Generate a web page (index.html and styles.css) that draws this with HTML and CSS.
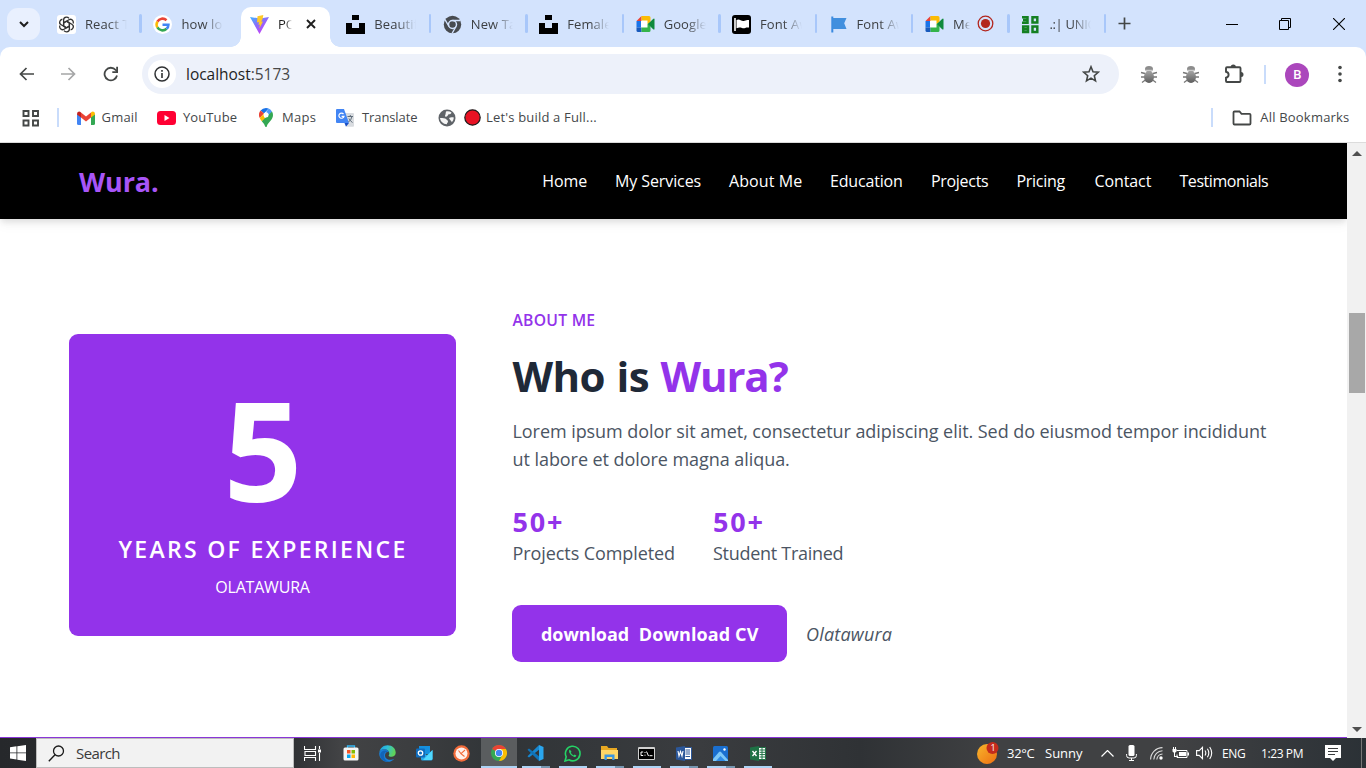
FILE: index.html
```html
<!DOCTYPE html>
<html lang="en">
<head>
<meta charset="utf-8">
<title>Portfolio</title>
<link rel="stylesheet" href="styles.css">
</head>
<body>
<svg class="defs" width="0" height="0">
  <defs>
    <linearGradient id="vt" x1="0" y1="0" x2=".7" y2="1"><stop offset="0" stop-color="#41b5ff"/><stop offset=".5" stop-color="#8d6bfb"/><stop offset="1" stop-color="#c83df5"/></linearGradient>
    <linearGradient id="bg1" x1="0" y1="0" x2="0" y2="1"><stop offset="0" stop-color="#a5a5a5"/><stop offset="1" stop-color="#5c5c5c"/></linearGradient>
    <linearGradient id="sun" x1="0" y1="0" x2="1" y2="1"><stop offset="0" stop-color="#f8b62c"/><stop offset="1" stop-color="#ee6f12"/></linearGradient>
    <linearGradient id="edge" x1="0" y1="0" x2="1" y2=".3"><stop offset="0" stop-color="#1b9de2"/><stop offset=".5" stop-color="#2fc0d8"/><stop offset="1" stop-color="#5fd35a"/></linearGradient>
    <symbol id="unsplash" viewBox="0 0 19 19"><path d="M6 0h7v5H6zM0 8h6v5h7V8h6v11H0z" fill="#000"/></symbol>
    <symbol id="meet" viewBox="0 0 18 16"><path d="M4 4h8v8H4z" fill="#fff"/><path d="M0 5l5-5v5z" fill="#ea4335"/><path d="M5 0h7.500q1.500 0 1.500 1.500V6l-3 2V4.500H5z" fill="#fbbc04"/><path d="M0 5h4.500v6.500H0z" fill="#1a73e8"/><path d="M0 11.500h5V16H1.500Q0 16 0 14.500z" fill="#185abc"/><path d="M5 11.500h6V8l3-2v8.500q0 1.500-1.500 1.500H5z" fill="#34b44a"/><path d="M11.500 8l5.100-5.100Q18 2 18 3.300v9.400q0 1.400-1.400.500z" fill="#0f8a3c"/></symbol>
    <symbol id="bug" viewBox="0 0 18 18"><path d="M1 7l4 1M1 11.500h4M2 17l4-3M17 7l-4 1M17 11.500h-4M16 17l-4-3" stroke="#777" fill="none" stroke-width="1.300"/><ellipse cx="9" cy="3.500" rx="4" ry="3" fill="#8d8d8d"/><path d="M5.500 4.800h7" stroke="#ddd"/><ellipse cx="9" cy="11.500" rx="5" ry="6" fill="url(#bg1)"/></symbol>
  </defs>
</svg>

<header class="chrome">
  <div class="tabstrip">
    <button class="tabsearch"><svg width="12" height="8" viewBox="0 0 12 8"><path d="M2 2l4 4 4-4" fill="none" stroke="#1f1f1f" stroke-width="2"/></svg></button>
    <div class="tabs">
      <div class="tab sep"><svg class="fav" width="19" height="19" viewBox="0 0 19 19"><rect width="19" height="19" rx="3" fill="#fff"/><g fill="none" stroke="#333" stroke-width="1.300"><path id="petal" d="M9.500 6.200L6.600 7.800V5q0-2.700 2.700-2.900 1.700-.1 2.700 1.200M6.600 7.800v3.400"/><use href="#petal" transform="rotate(60 9.500 9.500)"/><use href="#petal" transform="rotate(120 9.500 9.500)"/><use href="#petal" transform="rotate(180 9.500 9.500)"/><use href="#petal" transform="rotate(240 9.500 9.500)"/><use href="#petal" transform="rotate(300 9.500 9.500)"/></g></svg><span class="label">React Tailwind</span></div>
      <div class="tab"><svg class="fav google" width="19" height="19" viewBox="0 0 19 19"><circle cx="9.500" cy="9.500" r="9.500" fill="#fff"/><g fill="none" stroke-width="2.600"><path d="M4.400 6.600A5.900 5.900 0 0 1 13.500 5.200" stroke="#ea4335"/><path d="M4.400 12.400a5.900 5.900 0 0 1 0-5.800" stroke="#fbbc04"/><path d="M13.500 13.800a5.900 5.900 0 0 1-9.100-1.400" stroke="#34a853"/><path d="M9.500 9.700h5.900q0 2.700-1.900 4.100" stroke="#4285f4"/></g></svg><span class="label">how long does</span></div>
      <div class="tab active"><svg class="fav" width="19" height="19" viewBox="0 0 19 19"><path d="M0 2l9.500 17L19 2l-9 1.500z" fill="url(#vt)"/><path d="M13.300 0L7.500 1.200 7 7.500l2-.4-.6 2.700 1.500-.4-.6 4L13 6.500l-1.800.3 1.500-3.200z" fill="#ffc928"/></svg><span class="label">PORTFOLIO</span><svg class="close" width="10" height="10" viewBox="0 0 10 10"><path d="M1 1l8 8M9 1L1 9" stroke="#1f1f1f" stroke-width="1.900"/></svg></div>
      <div class="tab sep"><svg class="fav" width="19" height="19"><use href="#unsplash"/></svg><span class="label">Beautiful girl</span></div>
      <div class="tab sep"><svg class="fav" width="19" height="19" viewBox="0 0 19 19"><circle cx="9.500" cy="9.500" r="8.700" fill="#474b50"/><circle cx="9.500" cy="9.500" r="4" fill="none" stroke="#d3e3fd" stroke-width="1.500"/><path d="M9.500 5.500h8M6 11.500L2 4.700M13 11.500l-4 7" stroke="#d3e3fd" stroke-width="1.400"/></svg><span class="label">New Tab page</span></div>
      <div class="tab sep"><svg class="fav" width="19" height="19"><use href="#unsplash"/></svg><span class="label">Female pics</span></div>
      <div class="tab sep"><svg class="fav" width="19" height="16"><use href="#meet"/></svg><span class="label">Google Meet</span></div>
      <div class="tab sep"><svg class="fav" width="19" height="19" viewBox="0 0 19 19"><rect width="19" height="19" rx="3" fill="#000"/><path d="M3 3v13" stroke="#fff" stroke-width="1.600"/><path d="M4.500 5c3-2 5 2 8 .7 2-.8 3-.8 4.500-.7v7.500c-4-.5-4 1.300-7 .5-2-.6-3-.7-5.500.3z" fill="#fff"/></svg><span class="label">Font Awesome</span></div>
      <div class="tab sep"><svg class="fav" width="19" height="19" viewBox="0 0 19 19"><path d="M3.300 1.500v16" stroke="#3b8ae0" stroke-width="2"/><path d="M3.500 3h14l-2.300 5.200L17.500 14H3.500z" fill="#418fde"/></svg><span class="label">Font Awesome</span></div>
      <div class="tab sep"><svg class="fav" width="19" height="16"><use href="#meet"/></svg><span class="label short">Meet</span><svg class="rec" width="17" height="17" viewBox="0 0 17 17"><circle cx="8.500" cy="8.500" r="7.300" fill="none" stroke="#b3261e" stroke-width="1.300"/><circle cx="8.500" cy="8.500" r="4.600" fill="#b3261e"/></svg></div>
      <div class="tab sep"><svg class="fav" width="19" height="19" viewBox="0 0 19 19"><g fill="none" stroke="#158022" stroke-width="2.500"><path d="M1 2.200h5.500v5.600H1M2 5h4M11.500 2.200h4.800v5.200h-4.800zM2.200 11.500h4.800v5.500H2.200zM2 14.200h5M11.500 11.500h4.800v5.500h-4.800z"/></g></svg><span class="label wide">.:| UNICAL</span></div>
    </div>
    <svg class="plus" width="13" height="13" viewBox="0 0 13 13"><path d="M6.500 .5v12M.5 6.500h12" stroke="#444746" stroke-width="1.700"/></svg>
    <div class="winctl">
      <svg width="12" height="12" viewBox="0 0 12 12"><path d="M0 6.500h12" stroke="#000"/></svg>
      <svg width="12" height="12" viewBox="0 0 12 12"><path d="M.5 2.500h9v9h-9zM2.500 2V.5h9v9H10" fill="none" stroke="#000"/></svg>
      <svg width="12" height="12" viewBox="0 0 12 12"><path d="M0 0l12 12M12 0L0 12" stroke="#000" stroke-width="1.100"/></svg>
    </div>
  </div>

  <div class="toolbar">
    <svg class="back" width="15" height="14" viewBox="0 0 15 14"><path d="M15 7H1.500M7.500 1l-6 6 6 6" fill="none" stroke="#444746" stroke-width="1.700"/></svg>
    <svg class="fwd" width="15" height="14" viewBox="0 0 15 14"><path d="M0 7h13.500M7.500 1l6 6-6 6" fill="none" stroke="#a5a6a7" stroke-width="1.700"/></svg>
    <svg class="reload" width="16" height="16" viewBox="0 0 16 16"><path d="M14 9.500A6.300 6.300 0 1 1 12.700 4l1.800 2" fill="none" stroke="#444746" stroke-width="1.800"/><path d="M15 .8V7H9.300V5.200h3.900V.8z" fill="#444746"/></svg>
    <div class="omnibox">
      <span class="info"><svg width="16" height="16" viewBox="0 0 16 16"><circle cx="8" cy="8" r="7" fill="none" stroke="#303234" stroke-width="1.500"/><path d="M8 7v5M8 4v1.700" stroke="#303234" stroke-width="1.600"/></svg></span>
      <span class="url">localhost<i>:5173</i></span>
      <svg class="star" width="18" height="18" viewBox="0 0 18 18"><path d="M9 1.800l2 4.900 5.300.5-4 3.500 1.200 5.200L9 13.100l-4.500 2.800 1.200-5.200-4-3.500 5.300-.5z" fill="none" stroke="#444746" stroke-width="1.600"/></svg>
    </div>
    <svg class="ext1" width="18" height="19"><use href="#bug"/></svg>
    <svg class="ext2" width="18" height="19"><use href="#bug"/></svg>
    <svg class="puzzle" width="20" height="20" viewBox="0 0 20 20"><path d="M2 4.200q0-1 1-1h12.500q1 0 1 1V17q0 1-1 1H3q-1 0-1-1v-3.300q2.600-.6 2.600-3T2 7.700z" fill="none" stroke="#444746" stroke-width="1.900"/><path d="M6.700 3a2.600 2.600 0 0 1 5.200 0zM17 8a2.500 2.500 0 0 1 0 5z" fill="#444746"/></svg>
    <span class="vsep tsep"></span>
    <span class="avatar">B</span>
    <svg class="dots" width="4" height="18" viewBox="0 0 4 18"><g fill="#444746"><circle cx="2" cy="2.500" r="1.800"/><circle cx="2" cy="9" r="1.800"/><circle cx="2" cy="15.500" r="1.800"/></g></svg>
  </div>

  <div class="bookmarks">
    <svg class="apps" width="18" height="18" viewBox="0 0 18 18"><g fill="none" stroke="#444746" stroke-width="1.900"><path d="M1.500 2h5v5h-5zM11 2h5v5h-5zM1.500 11.500h5v5h-5zM11 11.500h5v5h-5z"/></g></svg>
    <span class="vsep"></span>
    <div class="bm gmail"><svg width="18" height="14" viewBox="0 0 18 14"><path d="M0 3v9.500Q0 14 1.500 14H4V5z" fill="#4285f4"/><path d="M18 3v9.500q0 1.500-1.500 1.500H14V5z" fill="#34a853"/><path d="M4 1.500v5l5 4 5-4v-5L9 5.400z" fill="#ea4335"/><path d="M0 3Q0 .7 2 .6q1.200 0 2 .9v5L0 3.500z" fill="#c5221f"/><path d="M18 3q0-2.300-2-2.400-1.200 0-2 .9v5l4-3z" fill="#fbbc04"/></svg><span>Gmail</span></div>
    <div class="bm yt"><svg width="19" height="14" viewBox="0 0 19 14"><rect width="19" height="14" rx="3.500" fill="#ff0033"/><path d="M7.500 4v6l5-3z" fill="#fff"/></svg><span>YouTube</span></div>
    <div class="bm maps"><svg width="14" height="19" viewBox="0 0 14 19"><path d="M7 0A7 7 0 0 0 1.600 2.500L5 5.500l4.700-5Q8.500 0 7 0z" fill="#1a73e8"/><path d="M1.600 2.500A6.800 6.800 0 0 0 .8 10l4.200-4.500z" fill="#ea4335"/><path d="M9.700.5L7 4.300a2.700 2.700 0 0 1 2 4.400l4-5A7 7 0 0 0 9.700.5z" fill="#4f9cf9"/><path d="M5 5.500L.8 10q.7 1.700 2 3.200L9 8.700Q7 11 5 9z" fill="#fbbc04"/><path d="M13 3.500L2.800 13.200Q5.500 16 6.200 18.400q.8 1.200 1.600 0C9 14 14 12 14 7q0-2-1-3.500z" fill="#34a853"/><circle cx="7" cy="7" r="2.500" fill="#fff"/></svg><span>Maps</span></div>
    <div class="bm trans"><svg width="18" height="18" viewBox="0 0 18 18"><path d="M8 4h9q1 0 1 1v12q0 .8-1 .8h-6z" fill="#d9dce0"/><path d="M1 0h7l5 14H1q-1 0-1-1V1q0-1 1-1z" fill="#4285f4"/><path d="M8.500 14H13l-3 3.700z" fill="#1a4fc4"/><path d="M7.500 5A2.600 2.600 0 1 0 8 7.300H5.600" fill="none" stroke="#fff" stroke-width="1.200"/><path d="M11.500 7.500H17M14.300 6v1.500M16 7.500q-.8 3.500-3.500 5.500M13 9.500q1.300 2.700 3.500 4" fill="none" stroke="#5f6d7a" stroke-width="1"/></svg><span>Translate</span></div>
    <div class="bm full"><svg width="18" height="18" viewBox="0 0 18 18"><circle cx="9" cy="9" r="8.500" fill="#5f6368"/><path d="M2 9c3 .3 5-.2 6 1s2 1.200 2 2.400-1 1-1.200 2.900C5 15 2.500 12.500 2 9zM8 2.500c2-.6 4-.2 5.500 1-.5 1.500-1.500 1.700-3 1.800C9.500 7 9 8 7 7.500c0-2 .8-2 .6-3zM11 9c1.500-.8 3-1 4.800-.4-.2 2-.8 3.500-2 4.600-.3-1.600-1.800-1.700-2.800-4.200z" fill="#f5f5f5"/></svg><svg width="17" height="17" viewBox="0 0 17 17"><circle cx="8.500" cy="8.500" r="7.700" fill="#e81224" stroke="#1b1b1b" stroke-width="1.200"/></svg><span>Let's build a Full...</span></div>
    <span class="vsep allsep"></span>
    <div class="bm all"><svg width="20" height="16" viewBox="0 0 20 16"><path d="M1.500 13.500v-11q0-1 1-1h5l2 2.300h8q1 0 1 1v8.700q0 1-1 1h-15q-1 0-1-1z" fill="none" stroke="#444746" stroke-width="1.800"/></svg><span>All Bookmarks</span></div>
  </div>
</header>

<main class="viewport">
  <div class="page">
    <nav class="nav">
      <a class="brand">Wura.</a>
      <ul class="links"><li>Home</li><li>My Services</li><li>About Me</li><li>Education</li><li>Projects</li><li>Pricing</li><li>Contact</li><li>Testimonials</li></ul>
    </nav>
    <section class="about">
      <div class="card">
        <div class="big">5</div>
        <div class="years">YEARS OF EXPERIENCE</div>
        <div class="who">OLATAWURA</div>
      </div>
      <div class="info-col">
        <div class="eyebrow">ABOUT ME</div>
        <h2 class="title">Who is <span>Wura?</span></h2>
        <p class="lead">Lorem ipsum dolor sit amet, consectetur adipiscing elit. Sed do eiusmod tempor incididunt<br>ut labore et dolore magna aliqua.</p>
        <div class="stats">
          <div class="stat"><b>50+</b><span>Projects Completed</span></div>
          <div class="stat"><b>50+</b><span>Student Trained</span></div>
        </div>
        <div class="cta"><a class="btn"><span>download</span><span>Download CV</span></a><em class="sig">Olatawura</em></div>
      </div>
    </section>
  </div>
  <div class="scrollbar">
    <svg width="10" height="5" viewBox="0 0 10 5"><path d="M0 5l5-5 5 5z" fill="#505050"/></svg>
    <div class="thumb"></div>
    <svg width="10" height="5" viewBox="0 0 10 5"><path d="M0 0l5 5 5-5z" fill="#505050"/></svg>
  </div>
</main>

<footer class="taskbar">
  <div class="start"><svg width="16" height="16" viewBox="0 0 16 16"><path d="M0 2.200l6.500-.9v6.200H0zM7.300 1.200L16 0v7.500H7.300zM0 8.300h6.500v6.200L0 13.600zM7.300 8.300H16V16l-8.700-1.200z" fill="#fff"/></svg></div>
  <div class="search"><svg width="17" height="17" viewBox="0 0 17 17"><circle cx="10.500" cy="6" r="5" fill="none" stroke="#1b1b1b" stroke-width="1.300"/><path d="M7 9.700L.8 16.200" stroke="#1b1b1b" stroke-width="1.400"/></svg><span>Search</span></div>
  <div class="apps-row">
    <div class="app"><svg class="taskview" width="18" height="17" viewBox="0 0 18 17"><path d="M.5 1v3.500h11V1M.5 16v-3.500h11V16M1 6.500h10.500v4H1zM15.500 1v3M15.500 8v8" fill="none" stroke="#fff" stroke-width="1.100"/><path d="M14 4.500h3v3h-3z" fill="#fff"/></svg></div>
    <div class="app"><svg width="16" height="16" viewBox="0 0 16 16"><path d="M4.500 3V1h7v2" fill="none" stroke="#35b6f2" stroke-width="1.300"/><rect x=".5" y="2.500" width="15" height="13" rx="1.500" fill="#f5f5f5"/><path d="M4 5h3.500v3.500H4z" fill="#f35325"/><path d="M8.500 5H12v3.500H8.500z" fill="#81bc06"/><path d="M4 9.500h3.500V13H4z" fill="#05a6f0"/><path d="M8.500 9.500H12V13H8.500z" fill="#ffba08"/></svg></div>
    <div class="app"><svg width="17" height="17" viewBox="0 0 17 17"><path d="M.3 7.500C1 3 4.500.2 8.500.2c5 0 8.200 3.600 8.200 7.300 0 3-2.200 4.300-4.500 4.300-1.800 0-2.800-.7-2.500-1.300.6-1 .8-1.800.4-3C9.500 5.500 7.800 4.300 5.500 4.300 3 4.300 1 5.500.3 7.500z" fill="url(#edge)"/><path d="M.2 8.500c.2-3 2.500-4.700 5.300-4.200C8 4.500 9.500 6 9.700 7.200 7.500 6.500 6 8.500 6 10.500c0 2.500 2.500 4.500 5.500 4.300 1.500-.1 2.700-.6 3.800-1.100-1.500 2-3.700 3.100-6.300 3.100C4 16.800.2 13.300.2 8.500z" fill="#1a80d8"/><path d="M9.700 7.200C7 6 4.800 8 5 11c.2 2.700 2 4.700 4.500 5.700-5 .3-8.300-3-8.300-6.700C1.200 6.500 6.500 3.500 9.700 7.200z" fill="#1264b8"/></svg></div>
    <div class="app"><svg width="17" height="16" viewBox="0 0 17 16"><path d="M3 1h11v8H3z" fill="#1490df"/><path d="M5 7l6 3 5.500-5v9q0 1.500-1.500 1.500H6.500Q5 15.500 5 14z" fill="#28a8ea"/><path d="M16.500 5L7 15h8q1.500 0 1.500-1.500z" fill="#50d9ff"/><rect y="3.500" width="9" height="9" rx="1" fill="#0f6cbd"/><circle cx="4.500" cy="8" r="2.200" fill="none" stroke="#fff" stroke-width="1.300"/></svg></div>
    <div class="app"><svg width="17" height="17" viewBox="0 0 17 17"><circle cx="8.500" cy="8.500" r="8.200" fill="#f26b3a"/><circle cx="8.500" cy="8.500" r="6" fill="#fff0ea"/><path d="M12 5L8 8.700l3.500 2.800M5.500 5.500L8 8.700" stroke="#f26b3a" stroke-width="1.100" fill="none"/></svg></div>
    <div class="app on full"><svg width="16" height="16" viewBox="0 0 16 16"><circle cx="8" cy="8" r="8" fill="#34a853"/><path d="M8 8L1.070 4A8 8 0 0 1 14.930 4z" fill="#ea4335"/><path d="M8 4h6.930A8 8 0 0 1 8 16l3.500-6z" fill="#fbbc04"/><circle cx="8" cy="8" r="4" fill="#fff"/><circle cx="8" cy="8" r="3.200" fill="#4285f4"/></svg></div>
    <div class="app on multi"><svg width="17" height="16" viewBox="0 0 17 16"><path d="M12 0l4.500 2v12L12 16z" fill="#2aa6ee"/><path d="M12 0v4.800L2 12.500.5 11.200z" fill="#1787d0"/><path d="M.5 4.800L2 3.500l10 7.700V16z" fill="#0f73b8"/></svg></div>
    <div class="app on"><svg width="17" height="17" viewBox="0 0 17 17"><path d="M1 16l1.200-4.200A7.300 7.300 0 1 1 5 14.800z" fill="none" stroke="#25d366" stroke-width="1.600"/><path d="M5.800 4.600q-1.300 1-.6 2.800 1.500 3.500 5 4.700 1.700.2 2.200-1.500L10.600 9.400l-1 1Q7.700 9.600 6.800 7.800l.7-1z" fill="#25d366"/></svg></div>
    <div class="app on multi"><svg width="17" height="14" viewBox="0 0 17 14"><path d="M0 0h6l1.500 2H16v3H0z" fill="#e8a822"/><path d="M0 4h17v9H0z" fill="#ffd766"/><path d="M3.500 14V8.500h10V14h-2.300v-3H5.800v3z" fill="#3b97e0"/></svg></div>
    <div class="app on"><svg width="17" height="13" viewBox="0 0 17 13"><path d="M.5.500h16v12H.5z" fill="#000" stroke="#d0d0d0"/><path d="M1 1.500h15" stroke="#d0d0d0"/><path d="M5.200 5H3v3.500h2.200M7 5v1M7 7.700v1M8.500 4.500l2 4.500M11.500 8.700h3" fill="none" stroke="#fff" stroke-width="1"/></svg></div>
    <div class="app on multi"><svg width="16" height="15" viewBox="0 0 16 15"><path d="M8 1.500h7.500v12H8z" fill="#fff" stroke="#2b579a"/><path d="M9.500 4H14M9.500 6H14M9.500 8H14M9.500 10.500H14" stroke="#2b579a"/><path d="M0 1.500L9 0v15L0 13.500z" fill="#2b579a"/><path d="M2 5l1 5 1.500-4.500L6 10l1-5" fill="none" stroke="#fff" stroke-width="1.100"/></svg></div>
    <div class="app on multi"><svg width="15" height="15" viewBox="0 0 15 15"><rect width="15" height="15" rx="1.500" fill="#1a6fd0"/><path d="M0 13l6-7q1-1 2 0l7 8v1H0z" fill="#7cc7f8"/><path d="M3 15l4.500-5 5 5z" fill="#2f8be6"/><circle cx="11.500" cy="3.500" r="1.200" fill="#fff"/></svg></div>
    <div class="app on"><svg width="16" height="15" viewBox="0 0 16 15"><path d="M8 1.500h7.500v12H8z" fill="#fff" stroke="#217346"/><path d="M9.500 4H15M9.500 6.300H15M9.500 8.600H15M9.500 11H15M12 2v11" stroke="#217346"/><path d="M0 1.500L9 0v15L0 13.500z" fill="#1e7145"/><path d="M2.500 5l4 5M6.500 5l-4 5" stroke="#fff" stroke-width="1.300"/></svg></div>
  </div>
  <div class="tray">
    <span class="weather"><svg width="22" height="22" viewBox="0 0 22 22"><circle cx="10" cy="12" r="10" fill="url(#sun)"/><circle cx="15.500" cy="6" r="6" fill="#c42b1c"/></svg><b>1</b></span>
    <span class="temp">32°C</span><span class="cond">Sunny</span>
    <svg class="chev" width="13" height="7" viewBox="0 0 13 7"><path d="M.5 6.500l6-6 6 6" fill="none" stroke="#fff" stroke-width="1.200"/></svg>
    <svg class="mic" width="11" height="16" viewBox="0 0 11 16"><rect x="2.500" width="6" height="11" rx="1.500" fill="#fff"/><path d="M.6 9v1.500q0 2.500 2.500 2.500h4.800q2.500 0 2.500-2.500V9M5.500 13v2.500M3 15.500h5" fill="none" stroke="#fff"/></svg>
    <svg class="wifi" width="13" height="13" viewBox="0 0 13 13"><g fill="none" stroke="#ddd" stroke-width="1.100"><path d="M.6 12.500A12 12 0 0 1 12.500.6M3.800 12.500a9 9 0 0 1 8.700-8.700M6.800 12.500A6 6 0 0 1 12.500 7"/></g><circle cx="11" cy="11" r="1.700" fill="#fff"/></svg>
    <svg class="batt" width="17" height="12" viewBox="0 0 17 12"><path d="M4.500 3.500h10.500v7h-10v-3" fill="none" stroke="#fff"/><path d="M7 5h7v4H7zM15.500 5.500h1.500v3h-1.500zM.5 2h4v2.500l-1 1h-2l-1-1zM1 0h1v2H1zM3 0h1v2H3zM2 5h1v4h3v1H2z" fill="#fff"/></svg>
    <svg class="vol" width="17" height="14" viewBox="0 0 17 14"><path d="M.6 4.600h2.600L6.500 1.300v11.400L3.200 9.400H.6zM9 4.500q1.600 2.500 0 5M11.400 2.800q2.800 4.200 0 8.400M13.700 1q4 6 0 12" fill="none" stroke="#fff" stroke-width="1.100"/></svg>
    <span class="lang">ENG</span><span class="clock">1:23 PM</span>
    <svg class="note" width="16" height="16" viewBox="0 0 16 16"><path d="M0 0h16v13h-5l-3 3-3-3H0z" fill="#fff"/><path d="M3 3.500h10M3 6.500h10M3 9.500h7" stroke="#3a3c3e"/></svg>
    <span class="peek"></span>
  </div>
</footer>
</body>
</html>
```
FILE: styles.css
```css
* { box-sizing: border-box; }
body { margin: 0; width: 1366px; height: 768px; overflow: hidden; display: flex; flex-direction: column; font-family: "Open Sans", "Noto Sans", sans-serif; background: #fff; }
svg { display: block; flex: none; }
.defs { position: absolute; }
span, li, a, em { white-space: nowrap; }

/* browser window */
.chrome { flex: none; height: 143px; background: #d3e3fd; border-bottom: 1px solid #dcdcdc; }
.tabstrip { display: flex; height: 47px; align-items: center; }
.tabsearch { margin: 1px 4.500px 0 7px; width: 33px; height: 32px; padding: 0; border: 0; border-radius: 11px; background: #e9f0fe; display: flex; align-items: center; justify-content: center; }
.tabs { display: flex; height: 47px; }
.tab { width: 96.450px; height: 47px; padding: 1px 0 0 12.500px; display: flex; align-items: center; position: relative; }
.tab.sep::after { content: ""; position: absolute; right: -1px; top: 14px; width: 2.500px; height: 19px; border-radius: 2px; background: #a8c7fa; }
.fav { margin: 0 9px 0 0; }
.fav.google { margin: 0 9.500px 0 -.500px; }
.label { width: 42px; overflow: hidden; font-size: 13px; line-height: 20px; letter-spacing: .1px; color: #3c3f42; -webkit-mask-image: linear-gradient(90deg, #000 55%, transparent); mask-image: linear-gradient(90deg, #000 55%, transparent); }
.label.short { width: 17px; margin-right: 7px; }
.label.wide { letter-spacing: -.3px; }
.rec { margin-top: -1px; }
.tab.active { z-index: 1; }
.tab.active::before { content: ""; position: absolute; z-index: -1; left: 3.500px; top: 7px; width: 89px; height: 40px; border-radius: 10px 10px 0 0; background: #fff; }
.tab.active::after { content: ""; position: absolute; z-index: -1; left: -6.500px; bottom: 0; width: 109px; height: 10px; background: radial-gradient(circle at 0 0, transparent 9.500px, #fff 10px) left / 10px 10px no-repeat, radial-gradient(circle at 100% 0, transparent 9.500px, #fff 10px) right / 10px 10px no-repeat; }
.tab.active .label { width: 14px; color: #1f1f1f; margin-right: 14.500px; }
.plus { margin: 0 0 0 12.500px; }
.winctl { margin-left: auto; display: flex; gap: 41px; padding-right: 21px; }
.winctl svg:first-child, .winctl svg:nth-child(2) { position: relative; left: -1px; }

.toolbar { height: 49px; padding-top: 5px; display: flex; align-items: center; background: #fff; border-radius: 10px 10px 0 0; }
.back { margin-left: 18.500px; }
.fwd { margin-left: 27px; }
.reload { margin-left: 27px; }
.omnibox { margin-left: 23.500px; width: 977px; height: 40px; border-radius: 20px; background: #edf1fa; display: flex; align-items: center; padding: 0 19px 0 6px; }
.info { width: 28px; height: 28px; border-radius: 50%; background: #fff; display: grid; place-items: center; }
.url { margin-left: 10px; font-size: 15.500px; letter-spacing: -.03px; color: #1f1f1f; }
.url i { font-style: normal; color: #474747; }
.star { margin-left: auto; }
.ext1 { margin-left: 21.400px; }
.ext2 { margin-left: 24px; }
.puzzle { margin-left: 24px; }
.vsep { width: 2px; height: 19px; background: #c9dcfb; }
.tsep { margin-left: 20px; }
.avatar { margin-left: 19px; margin-top: 1px; width: 24px; height: 24px; border-radius: 50%; background: #ab47bc; color: #fff; font: 500 13px/24px Roboto, sans-serif; text-align: center; }
.dots { margin-left: 28.500px; }

.bookmarks { height: 46px; padding: 0 16.500px 3px 22px; display: flex; align-items: center; background: #fff; }
.bookmarks .vsep { margin-left: 17px; }
.bm { display: flex; align-items: center; font-size: 13px; color: #44474a; line-height: 18px; }
.bm span { margin-top: -1px; }
.gmail { margin-left: 18px; width: 80px; gap: 6.500px; letter-spacing: .2px; }
.yt { width: 102px; gap: 7px; letter-spacing: .1px; }
.maps { width: 77px; gap: 9px; letter-spacing: .3px; }
.trans { width: 102px; gap: 8px; letter-spacing: -.1px; }
.full { gap: 8px; letter-spacing: .18px; }
.full span { margin-left: -3px; }
.bookmarks .allsep { margin-left: auto; }
.all { margin-left: 19.500px; gap: 8px; letter-spacing: .2px; }

/* page */
.viewport { height: 595px; flex: none; display: flex; }
.page { width: 1347px; border-bottom: 1px solid #8a35d8; }
.nav { height: 76px; background: #000; box-shadow: 0 4px 6px -1px rgba(0,0,0,.1), 0 6px 12px rgba(0,0,0,.04); display: flex; align-items: center; padding-left: 79px; }
.brand { font-size: 27px; font-weight: 700; color: #a855f7; width: 463.300px; letter-spacing: -.1px; padding-top: 1px; }
.links { list-style: none; margin: 0; padding: 0; display: grid; grid-template-columns: 72.700px 114px 101px 101px 85.500px 78px 85px auto; font-size: 16px; letter-spacing: -.1px; color: #fff; }
.links li:nth-child(3) { letter-spacing: .08px; }
.links li:nth-child(4) { letter-spacing: -.18px; }
.links li:nth-child(5), .links li:nth-child(6) { letter-spacing: -.3px; }
.links li:last-child { letter-spacing: -.44px; }
.about { display: grid; grid-template-columns: 387px 1fr; column-gap: 56.500px; padding: 87px 0 0 69px; }
.card { margin-top: 28px; height: 302px; border-radius: 9px; background: #9333ea; color: #fff; text-align: center; }
.big { font-size: 138px; font-weight: 700; line-height: 144px; margin-top: 42px; padding-left: 1px; letter-spacing: 0; }
.years { font-size: 23px; font-weight: 600; letter-spacing: 2.300px; line-height: 32px; margin-top: 13px; padding-left: 1px; white-space: nowrap; }
.who { font-size: 16px; letter-spacing: -.2px; line-height: 24px; margin-top: 10px; }
.eyebrow { font-size: 15.700px; font-weight: 600; letter-spacing: .25px; color: #9333ea; line-height: 28px; }
.title { margin: 17px 0 0; font-size: 42px; line-height: 50px; font-weight: 700; letter-spacing: -.55px; word-spacing: 1px; color: #1f2937; }
.title span { color: #9333ea; letter-spacing: -1.100px; }
.lead { margin: 15.500px 0 0; font-size: 18px; line-height: 28px; letter-spacing: -.06px; color: #4b5563; white-space: nowrap; }
.stats { margin-top: 31.500px; display: flex; }
.stat { width: 200.500px; display: flex; flex-direction: column; font-size: 18px; color: #4b5563; line-height: 28px; letter-spacing: -.08px; }
.stat b { font-size: 27px; line-height: 35px; color: #9333ea; letter-spacing: 1.800px; }
.stat + .stat span { letter-spacing: -.28px; }
.cta { margin: 38px 0 0 -.500px; display: flex; align-items: center; }
.btn { width: 275px; height: 57px; border-radius: 9px; background: #9333ea; color: #fff; font-weight: 700; font-size: 18px; padding: 0 0 0 29px; display: flex; align-items: center; gap: 9.700px; letter-spacing: -.08px; }
.btn span + span { letter-spacing: .12px; }
.sig { margin-left: 19px; font-size: 18px; color: #4b5563; letter-spacing: .2px; }
.scrollbar { width: 19px; background: #f1f1f1; display: flex; flex-direction: column; align-items: center; padding: 8px 0 6px; }
.thumb { width: 16px; height: 80px; background: #a8a8a8; margin: 157px 0 auto 1px; }

/* taskbar */
.taskbar { height: 30px; flex: none; display: flex; color: #fff; background: linear-gradient(90deg, #26282b 0, #2e3033 290px, #424345 340px, #3b3d3f 420px, #303437 500px, #3a3c3f 700px, #2f3235 860px, #404143 1000px, #404143 1180px, #2b3136 1366px); }
.start { width: 36px; display: grid; place-items: center; }
.search { width: 258px; height: 30px; background: #f2f2f2; border: 1px solid #bdbdbd; color: #3a3a3a; display: flex; align-items: center; padding-left: 11px; gap: 11px; font-size: 15px; letter-spacing: -.6px; }
.apps-row { display: flex; margin-left: 1px; }
.taskview { margin-left: -2px; }
.app { width: 37px; height: 30px; display: grid; place-items: center; position: relative; }
.app.on::after { content: ""; position: absolute; left: 5px; right: 4px; bottom: 0; height: 2px; background: #acd3f5; }
.app.multi::after { background: linear-gradient(90deg, #acd3f5 19px, #7696b0 19px); }
.app.full { background: #5a5d5f; width: 36px; margin-left: 1px; }
.app.full::after { left: 0; right: 0; }
.tray { margin-left: auto; display: flex; align-items: center; font-size: 13px; letter-spacing: -.3px; }
.weather { position: relative; margin-right: 8px; }
.weather b { position: absolute; left: 13.500px; top: 0; font-size: 9px; line-height: 12px; font-weight: 400; }
.temp { width: 38px; }
.cond { width: 56px; letter-spacing: 0; }
.mic { margin-left: 12px; }
.wifi { margin-left: 13px; }
.batt { margin-left: 9px; }
.vol { margin-left: 7px; }
.lang { margin-left: 9px; width: 39px; font-size: 12px; }
.clock { width: 64px; font-size: 12px; letter-spacing: -.4px; }
.note { margin-right: 20px; }
.peek { width: 1px; height: 30px; background: #777; margin-right: 4px; }
```
